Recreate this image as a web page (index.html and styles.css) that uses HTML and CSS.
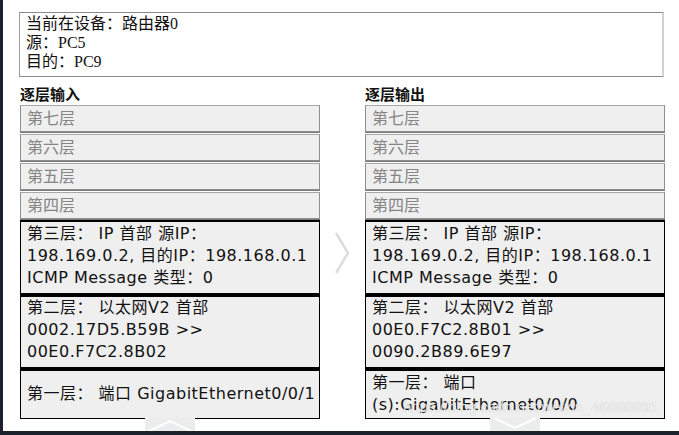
FILE: index.html
```html
<!DOCTYPE html>
<html lang="zh">
<head>
<meta charset="utf-8">
<link rel="stylesheet" href="styles.css">
</head>
<body>
<div class="frame">
  <div class="info">
    <div>当前在设备：路由器0</div>
    <div>源：PC5</div>
    <div>目的：PC9</div>
  </div>
  <div class="columns">
    <div class="col">
      <div class="heading">逐层输入</div>
      <div class="stack">
        <div class="layer off">第七层</div>
        <div class="layer off">第六层</div>
        <div class="layer off">第五层</div>
        <div class="layer off">第四层</div>
        <div class="layer on l3">第三层： IP 首部 源IP：<br>198.169.0.2, 目的IP：198.168.0.1<br>ICMP Message 类型：0</div>
        <div class="layer on l2">第二层： 以太网V2 首部<br>0002.17D5.B59B &gt;&gt;<br>00E0.F7C2.8B02</div>
        <div class="layer on l1 single">第一层： 端口 GigabitEthernet0/0/1</div>
      </div>
    </div>
    <div class="mid">
      <svg class="chev-right" width="16" height="42" viewBox="0 0 16 42"><path d="M2 1 L14 21 L2 41" fill="none" stroke="#dcdcdc" stroke-width="2.5"/></svg>
    </div>
    <div class="col">
      <div class="heading">逐层输出</div>
      <div class="stack">
        <div class="layer off">第七层</div>
        <div class="layer off">第六层</div>
        <div class="layer off">第五层</div>
        <div class="layer off">第四层</div>
        <div class="layer on l3">第三层： IP 首部 源IP：<br>198.169.0.2, 目的IP：198.168.0.1<br>ICMP Message 类型：0</div>
        <div class="layer on l2">第二层： 以太网V2 首部<br>00E0.F7C2.8B01 &gt;&gt;<br>0090.2B89.6E97</div>
        <div class="layer on l1">第一层： 端口<br>(s):GigabitEthernet0/0/0</div>
      </div>
    </div>
  </div>
  <div class="btn up"><svg width="50" height="12" viewBox="0 0 50 12"><path d="M4 12 L25 2 L46 12" fill="none" stroke="#fff" stroke-width="2"/></svg></div>
  <div class="btn down"><svg width="50" height="12" viewBox="0 0 50 12"><path d="M4 0 L25 10 L46 0" fill="none" stroke="#fff" stroke-width="2"/></svg></div>
  <div class="watermark">https://blog.csdn.net/weixin_46698891</div>
</div>
</body>
</html>
```

FILE: styles.css
```css
html, body {
  margin: 0;
  padding: 0;
  background: #1b222c;
}
.frame {
  position: relative;
  margin-left: 3px;
  width: 676px;
  height: 431px;
  background: #fff;
  box-sizing: border-box;
  padding: 12px 0 0 16px;
  overflow: hidden;
}
.info {
  width: 645px;
  height: 65px;
  box-sizing: border-box;
  border-top: 1px solid #8a8a8a;
  border-left: 1px solid #9a9a9a;
  border-bottom: 1px solid #8a8a8a;
  border-right: 2px solid #d2d2d2;
  padding: 1px 0 0 6px;
  font-family: "Liberation Serif", "Noto Sans CJK SC", serif;
  font-size: 16px;
  line-height: 19px;
  color: #111;
}
.columns {
  display: flex;
  margin-top: 7px;
  margin-left: 1px;
}
.col {
  width: 300px;
}
.mid {
  width: 45px;
  display: flex;
  justify-content: center;
  padding-top: 148px;
}
.chev-right {
  margin-left: -2px;
}
.heading {
  font-family: "Noto Sans CJK SC", sans-serif;
  font-weight: bold;
  font-size: 15px;
  line-height: 20px;
  color: #111;
  margin-bottom: 1px;
}
.stack {
  display: flex;
  flex-direction: column;
}
.layer {
  box-sizing: border-box;
  background: #efefef;
  font-family: "DejaVu Sans", "Noto Sans CJK SC", sans-serif;
  font-size: 16px;
  letter-spacing: 0.5px;
  padding: 0 6px;
  white-space: nowrap;
}
.off {
  height: 27px;
  line-height: 25px;
  color: #858585;
  letter-spacing: 0;
  border: 1px solid #8f8f8f;
  border-top-color: #a8a8a8;
  margin-bottom: 2px;
  box-shadow: 0 1px 0 #7a7a7a;
}
.on {
  color: #111;
  border: 1px solid #000;
  border-top-width: 2px;
  line-height: 22px;
}
.l3 {
  height: 74px;
  padding-top: 1px;
  margin-top: -1px;
}
.l2 {
  height: 74px;
  border-top-width: 3px;
}
.l1 {
  height: 51px;
  border-top-width: 3px;
  padding-top: 1px;
}
.l1.single {
  line-height: 46px;
  padding-top: 0;
}
.btn {
  position: absolute;
  bottom: 0;
  width: 50px;
  height: 13px;
  background: #ececec;
  display: flex;
  align-items: flex-end;
}
.btn.up { left: 142px; }
.btn.down { left: 487px; align-items: flex-start; }
.watermark {
  position: absolute;
  left: 400px;
  top: 398px;
  font-family: "Liberation Sans", sans-serif;
  font-size: 15px;
  color: rgba(255, 255, 255, 0.75);
  text-shadow: 0 0 1px rgba(150, 150, 150, 0.6);
  white-space: nowrap;
}
```
